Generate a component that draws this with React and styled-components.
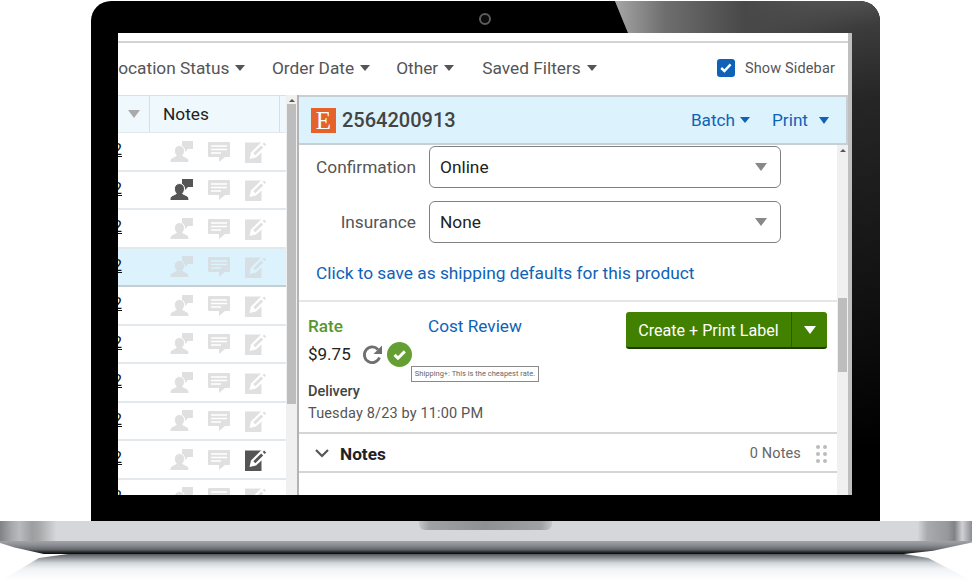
import React from 'react';
import styled, { createGlobalStyle } from 'styled-components';

const GlobalStyle = createGlobalStyle`
  html, body { margin: 0; padding: 0; background: #fff; }
  body { font-family: 'Roboto', 'Liberation Sans', sans-serif; }
`;

const Page = styled.div`
  width: 973px;
  height: 581px;
  overflow: hidden;
  background: #fff;
  padding-top: 1px;
  box-sizing: border-box;
`;

const Lid = styled.div`
  position: relative;
  margin-left: 91px;
  width: 789px;
  height: 520px;
  box-sizing: border-box;
  padding: 32px 28px 26px 27px;
  background: #000;
  border-radius: 20px 20px 0 0;
  overflow: hidden;
`;

const Shine = styled.div`
  position: absolute;
  top: 0;
  right: 0;
  width: 265px;
  height: 100%;
  clip-path: polygon(0 0, 100% 0, 100% 100%, 212px 100%);
  background: linear-gradient(172deg, #6a6a6a 0, #3c3c3c 60px, #262626 130px, #111 330px, #000 480px);

  &::before {
    content: '';
    position: absolute;
    inset: 0 0 auto 0;
    height: 40px;
    background: linear-gradient(90deg, #a6a6a6 0, #6e6e6e 50px, #484848 130px, rgba(60, 60, 60, 0) 240px);
  }
`;

const Camera = styled.div`
  position: absolute;
  top: 12px;
  left: 388px;
  width: 8px;
  height: 8px;
  border: 2px solid #5c5c5c;
  border-radius: 50%;
  background: #0a0a0a;
`;

const Screen = styled.div`
  position: relative;
  height: 462px;
  box-sizing: border-box;
  padding-top: 8px;
  background: #fff;
  border-right: 4px solid #bdbfc0;
  overflow: hidden;
  display: flex;
  flex-direction: column;
  color: #555;
`;

const FilterBar = styled.div`
  flex: none;
  height: 54px;
  box-sizing: border-box;
  border-top: 2px solid #d3d3d3;
  display: flex;
  align-items: center;
  padding: 0 13px 2px 0;
  font-size: 17.3px;
  color: #555;
`;

const FilterItem = styled.div`
  display: flex;
  align-items: center;
  gap: 6px;
  margin-left: ${({ $ml }) => $ml}px;
  white-space: nowrap;
`;

const Caret = styled.span`
  display: inline-block;
  width: 0;
  height: 0;
  border-left: ${({ $w = 5 }) => $w}px solid transparent;
  border-right: ${({ $w = 5 }) => $w}px solid transparent;
  border-top: ${({ $w = 5 }) => $w * 1.5 - 1}px solid ${({ $c = '#555' }) => $c};
`;

const SidebarToggle = styled.label`
  margin-left: auto;
  display: flex;
  align-items: center;
  gap: 10px;
  font-size: 14.5px;
  letter-spacing: 0.15px;
  color: #555;
`;

const CheckBox = styled.span`
  width: 18px;
  height: 18px;
  border-radius: 3px;
  background: #0f62b8;
  display: flex;
  align-items: center;
  justify-content: center;
`;

const Columns = styled.div`
  flex: 1;
  min-height: 0;
  display: flex;
`;

const LeftPane = styled.div`
  flex: none;
  width: 181px;
  box-sizing: border-box;
  border-right: 2px solid #b3b3b3;
  display: flex;
`;

const Table = styled.div`
  width: 168px;
  flex: none;
  overflow: hidden;
`;

const TableHead = styled.div`
  height: 38px;
  box-sizing: border-box;
  border-top: 1px solid #d9e0e3;
  border-bottom: 1px solid #e2e8eb;
  background: #eef8fd;
  display: grid;
  grid-template-columns: 32px 130px 6px;
  color: #222;
  font-size: 17.3px;
`;

const HeadCell = styled.div`
  display: flex;
  align-items: center;
  justify-content: ${({ $center }) => ($center ? 'center' : 'flex-start')};
  padding-left: ${({ $center }) => ($center ? 0 : 13)}px;
  padding-bottom: 1px;
  border-right: 1px solid #d5e0e6;
`;

const Row = styled.div`
  --row-bg: ${({ $selected }) => ($selected ? '#dcf3fd' : '#fff')};
  height: 38.5px;
  box-sizing: border-box;
  background: var(--row-bg);
  border-bottom: 2px solid ${({ $selected }) => ($selected ? '#c4ced3' : '#e2e8eb')};
  display: flex;
  align-items: center;
  padding-top: 1px;
`;

const OrderNo = styled.a`
  width: 31px;
  flex: none;
  box-sizing: border-box;
  padding-right: 27px;
  margin-bottom: 4px;
  display: flex;
  justify-content: flex-end;
  overflow: hidden;
  font-size: 16px;
  color: #111;
  text-decoration: underline;
`;

const RowIcons = styled.div`
  display: flex;
  align-items: center;
  margin-left: 21px;
  gap: 15px;
  color: ${({ $selected }) => ($selected ? '#d6dfe3' : '#e0e0e0')};
`;

const IconSlot = styled.span`
  display: flex;
  color: ${({ $on }) => ($on ? '#555' : 'inherit')};
`;

const Scrollbar = styled.div`
  flex: none;
  width: ${({ $w }) => $w}px;
  background: #f0f0f0;
  display: flex;
  flex-direction: column;
  align-items: center;
`;

const ScrollArrow = styled.span`
  margin: 4px 0 2px;
  width: 0;
  height: 0;
  border-left: 3px solid transparent;
  border-right: 3px solid transparent;
  border-bottom: 3px solid #555;
`;

const Thumb = styled.div`
  width: 9px;
  height: ${({ $h }) => $h}px;
  margin-top: ${({ $mt = 0 }) => $mt}px;
  background: #bdbdbd;
`;

const RightPane = styled.div`
  flex: 1;
  min-width: 0;
  display: flex;
  flex-direction: column;
`;

const OrderHeader = styled.div`
  flex: none;
  height: 50px;
  box-sizing: border-box;
  border: 2px solid #c7cfd3;
  border-left-width: 0;
  background: #dcf3fd;
  display: flex;
  align-items: center;
  padding: 0 17px 0 12px;
`;

const StoreMark = styled.span`
  width: 25px;
  height: 25px;
  background: #e5622b;
  color: #fff;
  font-family: 'Liberation Serif', serif;
  font-size: 25px;
  line-height: 25px;
  text-align: center;
`;

const OrderNumber = styled.span`
  margin-left: 6px;
  font-size: 20px;
  font-weight: 500;
  color: #444;
`;

const HeaderAction = styled.span`
  display: flex;
  align-items: center;
  gap: ${({ $gap }) => $gap}px;
  margin-left: ${({ $ml }) => $ml};
  font-size: 17.2px;
  color: #0f62b8;
`;

const DetailBody = styled.div`
  flex: 1;
  min-height: 0;
  display: flex;
`;

const Details = styled.div`
  flex: 1;
  min-width: 0;
  overflow: hidden;
`;

const FormSection = styled.div`
  height: 157px;
  box-sizing: border-box;
  padding: 1px 0 0 17px;
  border-bottom: 2px solid #e6e6e6;
  display: flex;
  flex-direction: column;
  gap: 13px;
`;

const FormRow = styled.div`
  display: flex;
  align-items: center;
  gap: 13px;
`;

const FormLabel = styled.span`
  width: 100px;
  text-align: right;
  font-size: 17.3px;
  color: #555;
`;

const Select = styled.div`
  width: 352px;
  height: 42px;
  box-sizing: border-box;
  border: 1.5px solid #7f7f7f;
  border-radius: 6px;
  display: flex;
  align-items: center;
  justify-content: space-between;
  padding: 0 13px 0 10px;
  font-size: 17.3px;
  color: #222;
`;

const SaveLink = styled.a`
  margin-top: 7px;
  font-size: 17.3px;
  color: #0f62b8;
`;

const RateSection = styled.div`
  height: 132px;
  box-sizing: border-box;
  padding: 10px 10px 0 9px;
  border-bottom: 2px solid #d5d5d5;
  display: flex;
  justify-content: space-between;
  align-items: flex-start;
`;

const RateColumn = styled.div`
  display: flex;
  flex-direction: column;
`;

const RateTop = styled.div`
  display: flex;
  height: 20px;
  margin-top: 4px;
  align-items: center;
  font-size: 17.2px;
`;

const RateTitle = styled.span`
  width: 120px;
  font-weight: 500;
  color: #5a962c;
`;

const CostReview = styled.a`
  color: #0f62b8;
`;

const PriceRow = styled.div`
  position: relative;
  display: flex;
  align-items: center;
  gap: 4px;
  margin-top: 5px;
  height: 26px;
  font-size: 17px;
  color: #222;
`;

const Price = styled.span`
  width: 50px;
`;

const Tooltip = styled.div`
  position: absolute;
  left: 103px;
  top: 25px;
  width: 128px;
  height: 16px;
  box-sizing: border-box;
  border: 1px solid #8a8a8a;
  background: #fff;
  font-size: 7.5px;
  line-height: 14px;
  text-align: center;
  white-space: nowrap;
  color: #666;
`;

const DeliveryTitle = styled.div`
  margin-top: 16px;
  font-size: 14.5px;
  font-weight: 500;
  color: #444;
`;

const DeliveryTime = styled.div`
  margin-top: 5px;
  font-size: 14.5px;
  letter-spacing: 0.15px;
  color: #555;
`;

const SplitButton = styled.div`
  width: 201px;
  height: 37px;
  box-sizing: border-box;
  border-radius: 3px;
  border-bottom: 2px solid #1d3d00;
  background: #428000;
  display: flex;
  color: #fff;
  font-size: 16.1px;
`;

const ButtonLabel = styled.span`
  flex: 1;
  display: flex;
  align-items: center;
  justify-content: center;
  padding-top: 2px;
  border-right: 1px solid #2c5a05;
`;

const ButtonCaret = styled.span`
  width: 35px;
  display: flex;
  align-items: center;
  justify-content: center;
`;

const NotesRow = styled.div`
  height: 39px;
  box-sizing: border-box;
  border-bottom: 2px solid #d5d5d5;
  padding: 2px 10px 0 16px;
  display: flex;
  align-items: center;
`;

const NotesTitle = styled.span`
  margin-left: 11px;
  font-size: 17.2px;
  font-weight: 700;
  color: #222;
`;

const NotesCount = styled.span`
  margin-left: auto;
  margin-right: -1px;
  font-size: 14.5px;
  letter-spacing: 0.15px;
  color: #666;
`;

const DragDots = styled.span`
  margin-left: 16px;
  display: grid;
  grid-template-columns: 4px 4px;
  gap: 3px 3px;

  i {
    width: 4px;
    height: 4px;
    border-radius: 50%;
    background: #bcbcbc;
  }
`;

const Base = styled.div`
  position: relative;
  width: 972px;
  height: 20px;
  background: linear-gradient(90deg, #808285 0, #a9abae 1.3%, #b9babd 2%, #9c9ea1 3.3%, #a5a7a9 4%, #d6d7da 5.8%, #d6d7da 94.4%, #a8aaad 95.4%, #96989b 97.5%, #808285 98.2%, #d0d1d4 99%, #8a8c8f 100%);
`;

const Notch = styled.div`
  position: absolute;
  top: 0;
  left: 419px;
  width: 133px;
  height: 9px;
  border-radius: 0 0 6px 6px;
  background: linear-gradient(90deg, #c4c6c9 0, #9fa1a5 8%, #8e9094 50%, #9fa1a5 92%, #c4c6c9 100%);
`;

const Lip = styled.div`
  width: 972px;
  height: 13px;
  clip-path: polygon(0 0, 100% 0, 100% 12%, 96% 75%, 93% 100%, 4.5% 100%, 1.5% 50%, 0 15%);
  background: linear-gradient(180deg, #9fa2a7 0, #8c8f94 30%, #65686d 65%, #2a2b2d 85%, #050505 100%);
`;

const Reflection = styled.div`
  width: 972px;
  height: 27px;
  clip-path: polygon(7% 0, 93% 0, 95.5% 15%, 99.5% 90%, 99.5% 100%, 0.5% 100%, 0.5% 90%, 4% 15%);
  background: linear-gradient(180deg, #55585d 0, #8f9398 15%, #d0d5d9 33%, #f0f3f6 55%, #fff 100%);
`;

const PersonChat = () => (
  <svg width="23" height="22" viewBox="0 0 23 22">
    <path fill="currentColor" d="M12 0h11v8h-5l-3 3v-3h-3z" />
    <path fill="currentColor" stroke="var(--row-bg)" strokeWidth="1" d="M9.500 4.500c3 0 5 2.300 5 5.300 0 2-.9 3.600-1.900 4.600 0 1 3.700 1.500 5.400 3.300.7.800.9 2 .9 3.800H0c0-1.800.2-3 .9-3.800 1.700-1.800 5.400-2.300 5.400-3.300-1-1-1.900-2.600-1.900-4.600 0-3 2.100-5.300 5.100-5.300z" />
  </svg>
);

const ChatLines = () => (
  <svg width="22" height="22" viewBox="0 0 22 22">
    <path fill="currentColor" d="M1 1h20a1 1 0 0 1 1 1v13a1 1 0 0 1-1 1h-4l-6 5v-5H1a1 1 0 0 1-1-1V2a1 1 0 0 1 1-1z" />
    <path fill="none" stroke="var(--row-bg)" strokeWidth="1.600" d="M3 5h16M3 8.500h16M3 12h10" />
  </svg>
);

const EditNote = () => (
  <svg width="22" height="22" viewBox="0 0 22 22">
    <path fill="currentColor" d="M0 1.500h16.500V22H0z" />
    <path fill="var(--row-bg)" d="M4.500 18l1.500-6.500L16 1.500h6v5L11 16.500z" />
    <path fill="currentColor" d="M8.300 12.300 16.200 4.400l2 2-7.900 7.900z" />
    <path fill="currentColor" d="M17.700 2.900l1.400-1.400 2 2-1.400 1.400z" />
  </svg>
);

const RefreshIcon = () => (
  <svg width="21" height="21" viewBox="0 0 21 21">
    <path fill="none" stroke="#6f6f6f" strokeWidth="2.800" d="M17.500 13.500a7.800 7.800 0 1 1-1.500-8" />
    <path fill="#6f6f6f" d="M20 1.500V10h-8.500z" />
  </svg>
);

const CheckCircle = () => (
  <svg width="25" height="25" viewBox="0 0 25 25">
    <circle cx="12.500" cy="12.500" r="12.500" fill="#659f34" />
    <path fill="none" stroke="#fff" strokeWidth="3" d="M7.500 12.800l3.500 3.400 6.800-6.800" />
  </svg>
);

const rows = [
  {}, { chat: true }, {}, { selected: true }, {}, {}, {}, {}, { edit: true }, {},
];

const filters = [
  { label: 'Allocation Status', ml: -19.5 },
  { label: 'Order Date', ml: 26.5 },
  { label: 'Other', ml: 26 },
  { label: 'Saved Filters', ml: 28 },
];

export default function App() {
  return (
    <Page>
      <GlobalStyle />
      <Lid>
        <Shine />
        <Camera />
        <Screen>
          <FilterBar>
            {filters.map((f) => (
              <FilterItem key={f.label} $ml={f.ml}>
                {f.label}
                <Caret />
              </FilterItem>
            ))}
            <SidebarToggle>
              <CheckBox>
                <svg width="12" height="10" viewBox="0 0 12 10">
                  <path fill="none" stroke="#fff" strokeWidth="2.400" d="M1.200 5l3.200 3 6.200-6.600" />
                </svg>
              </CheckBox>
              Show Sidebar
            </SidebarToggle>
          </FilterBar>

          <Columns>
            <LeftPane>
              <Table>
                <TableHead>
                  <HeadCell $center><Caret $w={6} $c="#aaa" /></HeadCell>
                  <HeadCell>Notes</HeadCell>
                  <span />
                </TableHead>
                {rows.map((r, i) => (
                  <Row key={i} $selected={r.selected}>
                    <OrderNo>8/22</OrderNo>
                    <RowIcons $selected={r.selected}>
                      <IconSlot $on={r.chat}><PersonChat /></IconSlot>
                      <IconSlot><ChatLines /></IconSlot>
                      <IconSlot $on={r.edit}><EditNote /></IconSlot>
                    </RowIcons>
                  </Row>
                ))}
              </Table>
              <Scrollbar $w={11}>
                <ScrollArrow />
                <Thumb $h={300} />
              </Scrollbar>
            </LeftPane>

            <RightPane>
              <OrderHeader>
                <StoreMark>E</StoreMark>
                <OrderNumber>2564200913</OrderNumber>
                <HeaderAction $gap={5} $ml="auto">Batch <Caret $c="#0f62b8" /></HeaderAction>
                <HeaderAction $gap={11} $ml="22px">Print <Caret $w={5.5} $c="#0f62b8" /></HeaderAction>
              </OrderHeader>

              <DetailBody>
                <Details>
                  <FormSection>
                    <FormRow>
                      <FormLabel>Confirmation</FormLabel>
                      <Select>Online <Caret $w={6} $c="#888" /></Select>
                    </FormRow>
                    <FormRow>
                      <FormLabel>Insurance</FormLabel>
                      <Select>None <Caret $w={6} $c="#888" /></Select>
                    </FormRow>
                    <SaveLink>Click to save as shipping defaults for this product</SaveLink>
                  </FormSection>

                  <RateSection>
                    <RateColumn>
                      <RateTop>
                        <RateTitle>Rate</RateTitle>
                        <CostReview>Cost Review</CostReview>
                      </RateTop>
                      <PriceRow>
                        <Price>$9.75</Price>
                        <RefreshIcon />
                        <CheckCircle />
                        <Tooltip>Shipping+: This is the cheapest rate.</Tooltip>
                      </PriceRow>
                      <DeliveryTitle>Delivery</DeliveryTitle>
                      <DeliveryTime>Tuesday 8/23 by 11:00 PM</DeliveryTime>
                    </RateColumn>
                    <SplitButton>
                      <ButtonLabel>Create + Print Label</ButtonLabel>
                      <ButtonCaret><Caret $w={6} $c="#fff" /></ButtonCaret>
                    </SplitButton>
                  </RateSection>

                  <NotesRow>
                    <svg width="14" height="9" viewBox="0 0 14 9">
                      <path fill="none" stroke="#555" strokeWidth="2.200" d="M1 1l6 6 6-6" />
                    </svg>
                    <NotesTitle>Notes</NotesTitle>
                    <NotesCount>0 Notes</NotesCount>
                    <DragDots>
                      <i /><i /><i /><i /><i /><i />
                    </DragDots>
                  </NotesRow>
                </Details>
                <Scrollbar $w={11}>
                  <ScrollArrow />
                  <Thumb $h={74} $mt={144} />
                </Scrollbar>
              </DetailBody>
            </RightPane>
          </Columns>
        </Screen>
      </Lid>
      <Base><Notch /></Base>
      <Lip />
      <Reflection />
    </Page>
  );
}
